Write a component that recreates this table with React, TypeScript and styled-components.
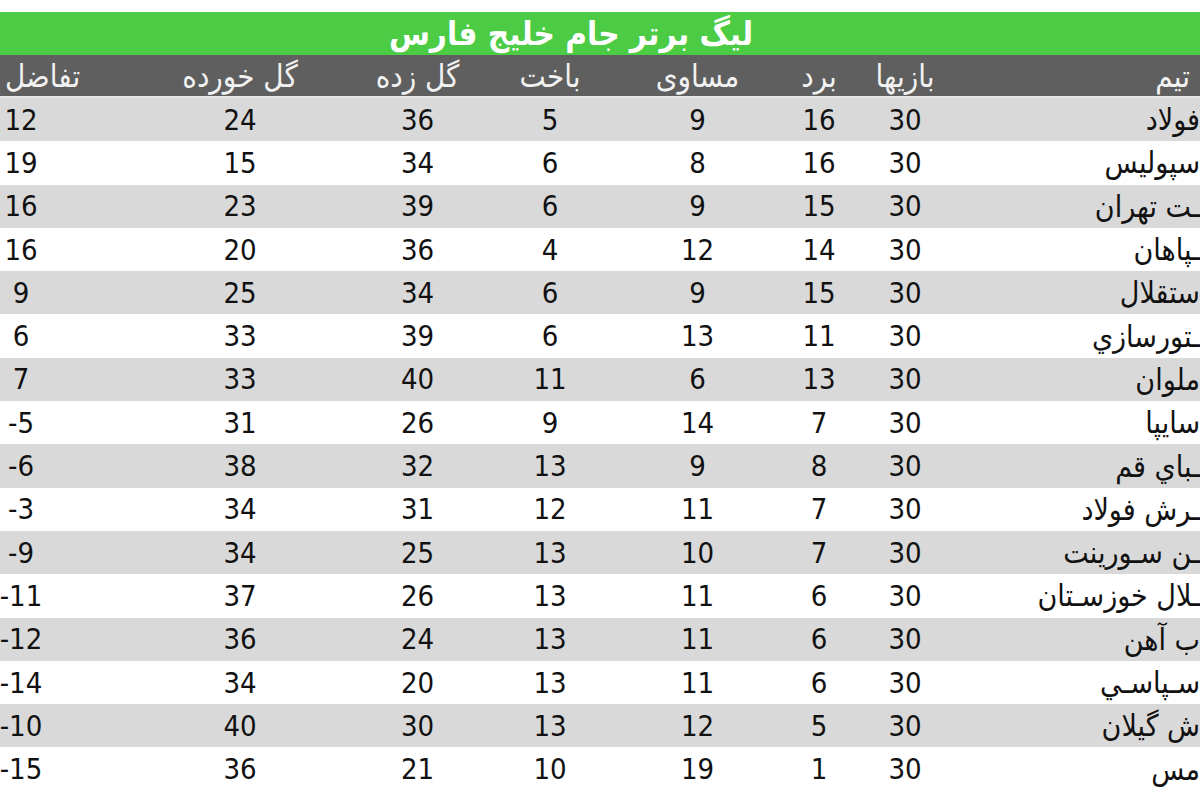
import styled, { createGlobalStyle } from "styled-components";

const GlobalStyle = createGlobalStyle`
  html, body {
    margin: 0;
    padding: 0;
    background: #ffffff;
    overflow: hidden;
  }
`;

type Team = {
  name: string;
  played: number;
  won: number;
  drawn: number;
  lost: number;
  goalsFor: number;
  goalsAgainst: number;
  diff: number;
};

// names are cut by the right edge of the picture, so only the visible part is kept
const teams: Team[] = [
  { name: "فولاد", played: 30, won: 16, drawn: 9, lost: 5, goalsFor: 36, goalsAgainst: 24, diff: 12 },
  { name: "سپولیس", played: 30, won: 16, drawn: 8, lost: 6, goalsFor: 34, goalsAgainst: 15, diff: 19 },
  { name: "ـت تهران", played: 30, won: 15, drawn: 9, lost: 6, goalsFor: 39, goalsAgainst: 23, diff: 16 },
  { name: "ـپاهان", played: 30, won: 14, drawn: 12, lost: 4, goalsFor: 36, goalsAgainst: 20, diff: 16 },
  { name: "ستقلال", played: 30, won: 15, drawn: 9, lost: 6, goalsFor: 34, goalsAgainst: 25, diff: 9 },
  { name: "ـتورسازي", played: 30, won: 11, drawn: 13, lost: 6, goalsFor: 39, goalsAgainst: 33, diff: 6 },
  { name: "ملوان", played: 30, won: 13, drawn: 6, lost: 11, goalsFor: 40, goalsAgainst: 33, diff: 7 },
  { name: "سايپا", played: 30, won: 7, drawn: 14, lost: 9, goalsFor: 26, goalsAgainst: 31, diff: -5 },
  { name: "ـباي قم", played: 30, won: 8, drawn: 9, lost: 13, goalsFor: 32, goalsAgainst: 38, diff: -6 },
  { name: "ـرش فولاد", played: 30, won: 7, drawn: 11, lost: 12, goalsFor: 31, goalsAgainst: 34, diff: -3 },
  { name: "ـن سـورينت", played: 30, won: 7, drawn: 10, lost: 13, goalsFor: 25, goalsAgainst: 34, diff: -9 },
  { name: "ـلال خوزسـتان", played: 30, won: 6, drawn: 11, lost: 13, goalsFor: 26, goalsAgainst: 37, diff: -11 },
  { name: "ب آهن", played: 30, won: 6, drawn: 11, lost: 13, goalsFor: 24, goalsAgainst: 36, diff: -12 },
  { name: "سـپاسـي", played: 30, won: 6, drawn: 11, lost: 13, goalsFor: 20, goalsAgainst: 34, diff: -14 },
  { name: "ش گيلان", played: 30, won: 5, drawn: 12, lost: 13, goalsFor: 30, goalsAgainst: 40, diff: -10 },
  { name: "مس", played: 30, won: 1, drawn: 19, lost: 10, goalsFor: 21, goalsAgainst: 36, diff: -15 },
];

const FONT = `"DejaVu Sans Condensed", "DejaVu Sans", sans-serif`;

const Page = styled.div`
  width: 1200px;
  padding-top: 12px;
  background: #ffffff;
  font-family: ${FONT};
`;

const TitleBar = styled.div`
  height: 43px;
  background: #4ccb45;
  color: #ffffff;
  font-weight: bold;
  font-size: 33px;
  line-height: 43px;
  text-align: center;
  padding-right: 58px;
  direction: rtl;
  overflow: hidden;
`;

const Row = styled.div<{ $shade: "dark" | "light" | "none" }>`
  display: grid;
  direction: rtl;
  grid-template-columns: 248px 94px 78px 165px 130px 135px 220px 130px;
  height: ${(p) => (p.$shade === "dark" ? "41px" : "43.3px")};
  background: ${(p) =>
    p.$shade === "dark" ? "#5f5f5f" : p.$shade === "light" ? "#d9d9d9" : "#ffffff"};
  border-bottom: ${(p) => (p.$shade === "dark" ? "2px solid #e6e6e6" : "none")};
  color: ${(p) => (p.$shade === "dark" ? "#f2f2f2" : "#111111")};
`;

const Cell = styled.div<{ $align?: "center" | "right" | "left"; $size: number }>`
  font-size: ${(p) => p.$size}px;
  white-space: nowrap;
  display: flex;
  align-items: center;
  justify-content: ${(p) =>
    p.$align === "right" ? "flex-start" : p.$align === "left" ? "flex-end" : "center"};
`;

const TeamName = styled.span<{ $inset: number }>`
  padding-right: ${(p) => p.$inset}px;
`;

const Num = styled.span`
  direction: ltr;
  unicode-bidi: isolate;
`;

// sign and digits as separate flex items so the minus always sits on the left
const DiffNum = styled.span`
  display: flex;
  flex-direction: row;
  direction: ltr;
  justify-content: center;
  width: 42px;
  flex-shrink: 0;
`;

const HeadLabel = styled.span<{ $inset?: number }>`
  padding-left: ${(p) => p.$inset ?? 0}px;
`;

const headers = ["بازیها", "برد", "مساوی", "باخت", "گل زده", "گل خورده"];

export default function App() {
  return (
    <Page>
      <GlobalStyle />
      <TitleBar>لیگ برتر جام خلیج فارس</TitleBar>
      <Row $shade="dark">
        <Cell $align="right" $size={31}>
          <TeamName $inset={10}>تیم</TeamName>
        </Cell>
        {headers.map((h) => (
          <Cell key={h} $size={31}>
            {h}
          </Cell>
        ))}
        <Cell $align="left" $size={31}>
          <HeadLabel $inset={5}>تفاضل</HeadLabel>
        </Cell>
      </Row>
      {teams.map((t, i) => (
        <Row key={t.name} $shade={i % 2 === 0 ? "light" : "none"}>
          <Cell $align="right" $size={30}>
            <TeamName $inset={0}>{t.name}</TeamName>
          </Cell>
          <Cell $size={29}>
            <Num>{t.played}</Num>
          </Cell>
          <Cell $size={29}>
            <Num>{t.won}</Num>
          </Cell>
          <Cell $size={29}>
            <Num>{t.drawn}</Num>
          </Cell>
          <Cell $size={29}>
            <Num>{t.lost}</Num>
          </Cell>
          <Cell $size={29}>
            <Num>{t.goalsFor}</Num>
          </Cell>
          <Cell $size={29}>
            <Num>{t.goalsAgainst}</Num>
          </Cell>
          <Cell $align="left" $size={29}>
            <DiffNum>
              {t.diff < 0 && <span>-</span>}
              <span>{Math.abs(t.diff)}</span>
            </DiffNum>
          </Cell>
        </Row>
      ))}
    </Page>
  );
}
